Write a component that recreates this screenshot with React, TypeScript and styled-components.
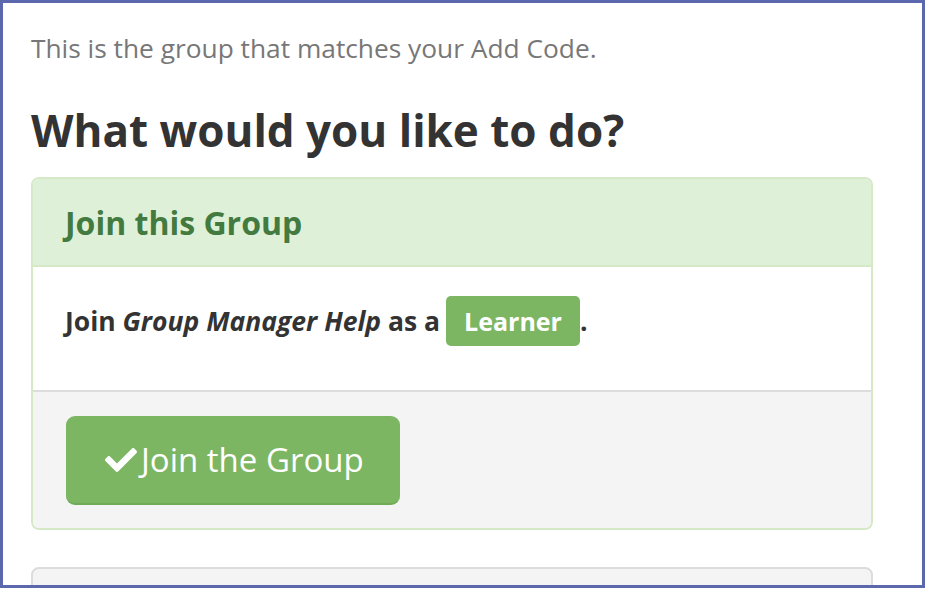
import React from "react";
import styled, { createGlobalStyle } from "styled-components";
import { FaCheck } from "react-icons/fa";

const Global = createGlobalStyle`
  html, body { margin: 0; padding: 0; background: #fff; overflow: hidden; }
  body { font-family: "Open Sans", "Noto Sans", sans-serif; }
`;

const Frame = styled.div`
  box-sizing: border-box;
  width: 925px;
  height: 588px;
  border: 3px solid #5b68ae;
  overflow: hidden;
  padding: 28px 49px 0 28px;
  background: #fff;
`;

const Intro = styled.p`
  margin: 0;
  font-size: 26.3px;
  line-height: 35px;
  color: #777;
`;

const Title = styled.h2`
  margin: 38px 0 0;
  font-size: 44px;
  line-height: 52px;
  font-weight: 700;
  color: #333;
`;

const Panel = styled.section<{ $tone: "success" | "default" }>`
  margin-top: ${(p) => (p.$tone === "success" ? "21px" : "37px")};
  border: 2px solid ${(p) => (p.$tone === "success" ? "#d6e9c6" : "#dcdcdc")};
  border-radius: 8px;
  background: ${(p) => (p.$tone === "success" ? "#fff" : "#f4f4f4")};
  min-height: ${(p) => (p.$tone === "success" ? "0" : "100px")};
  overflow: hidden;
`;

const PanelHeading = styled.div`
  display: flex;
  align-items: center;
  height: 86px;
  padding: 0 32px;
  background: #dff0d8;
  border-bottom: 2px solid #d6e9c6;
  color: #437a3f;
  font-size: 32px;
  font-weight: 700;
`;

const PanelBody = styled.div`
  display: flex;
  align-items: center;
  padding: 29px 32px 44px;
  font-size: 26.5px;
  font-weight: 700;
  color: #333;
  white-space: pre;
`;

const Em = styled.em`
  font-style: italic;
`;

const Label = styled.span`
  display: inline-flex;
  align-items: center;
  height: 50px;
  padding: 0 18px;
  margin-left: 6px;
  border-radius: 5px;
  background: #7cb663;
  color: #fff;
  font-size: 25px;
  font-weight: 700;
`;

const PanelFooter = styled.div`
  background: #f4f4f4;
  border-top: 2px solid #dddddd;
  padding: 24px 33px 23px;
`;

const Button = styled.button`
  box-sizing: border-box;
  display: inline-flex;
  align-items: center;
  gap: 4px;
  width: 334px;
  height: 89px;
  padding: 0 0 0 39px;
  border: none;
  border-bottom: 2px solid #70aa57;
  border-radius: 9px;
  background: #7cb663;
  color: #fff;
  font-family: "Open Sans", "Noto Sans", sans-serif;
  font-size: 33px;
  font-weight: 400;
  cursor: pointer;
`;

export default function App() {
  return (
    <>
      <Global />
      <Frame>
        <Intro>This is the group that matches your Add Code.</Intro>
        <Title>What would you like to do?</Title>
        <Panel $tone="success">
          <PanelHeading>Join this Group</PanelHeading>
          <PanelBody>
            {"Join "}
            <Em>Group Manager Help</Em>
            {" as a"}
            <Label>Learner</Label>.
          </PanelBody>
          <PanelFooter>
            <Button>
              <FaCheck size={32} />
              Join the Group
            </Button>
          </PanelFooter>
        </Panel>
        <Panel $tone="default" />
      </Frame>
    </>
  );
}
